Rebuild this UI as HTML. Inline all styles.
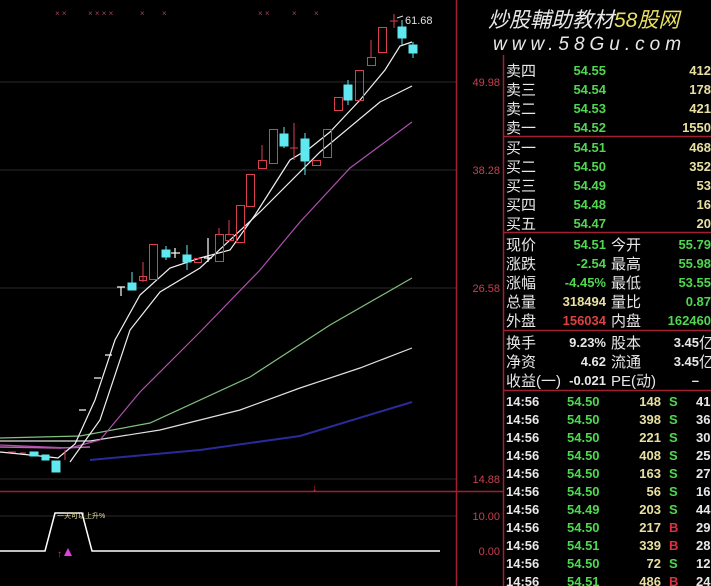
<!DOCTYPE html>
<html><head><meta charset="utf-8"><style>
html,body{margin:0;padding:0;background:#000;overflow:hidden}
svg{display:block}
text{font-family:"Liberation Sans","Noto Sans CJK SC",sans-serif}
.cn{font-family:"Liberation Sans","Noto Sans CJK SC",sans-serif;font-size:15px;fill:#e8e8e8}
.g{fill:#4fd84f;font-size:13px;font-weight:bold}
.y{fill:#e8e0a0;font-size:13px;font-weight:bold}
.w{fill:#e8e8e8;font-size:13px;font-weight:bold}
.ax{fill:#c84050;font-size:11px}
</style></head><body>
<svg width="711" height="586" viewBox="0 0 711 586" xmlns="http://www.w3.org/2000/svg">
<rect width="711" height="586" fill="#000"/>
<g stroke="#2a2a2a" stroke-width="1">
<line x1="0" y1="82" x2="456" y2="82"/>
<line x1="0" y1="170" x2="456" y2="170"/>
<line x1="0" y1="288" x2="456" y2="288"/>
<line x1="0" y1="479" x2="456" y2="479"/>
<line x1="0" y1="516" x2="456" y2="516"/>
</g>
<g stroke="#a02030" stroke-width="1.5">
<line x1="456.5" y1="0" x2="456.5" y2="586"/>
<line x1="503.5" y1="55" x2="503.5" y2="586"/>
<line x1="0" y1="491.5" x2="503" y2="491.5"/>
<line x1="503" y1="136.5" x2="711" y2="136.5"/>
<line x1="503" y1="232.5" x2="711" y2="232.5"/>
<line x1="503" y1="330.5" x2="711" y2="330.5"/>
<line x1="503" y1="390.5" x2="711" y2="390.5"/>
</g>
<g class="ax" text-anchor="end">
<text x="500" y="86">49.98</text>
<text x="500" y="174">38.28</text>
<text x="500" y="292">26.58</text>
<text x="500" y="483">14.88</text>
<text x="500" y="520">10.00</text>
<text x="500" y="555">0.00</text>
</g>
<g fill="#a04060" font-size="8">
<text x="55" y="16">× ×</text><text x="88" y="16">× × × ×</text><text x="140" y="16">×</text><text x="162" y="16">×</text>
<text x="258" y="16">× ×</text><text x="292" y="16">×</text><text x="314" y="16">×</text>
</g>
<g fill="none" stroke-width="1.2">
<path d="M0,447 L60,448 L90,447" stroke="#c060b0" stroke-width="1.5"/>
<path d="M90,460 L200,450 L300,436 L412,402" stroke="#2a2a9a" stroke-width="2"/>
<path d="M0,438 L80,436 L150,423 L250,377 L330,325 L412,278" stroke="#80c080"/>
<path d="M0,441 L90,441 L160,430 L240,410 L300,388 L360,368 L412,348" stroke="#e0e0e0"/>
<path d="M0,445 L70,448 L100,440 L140,392 L200,332 L260,270 L300,222 L350,168 L412,122" stroke="#b050b0"/>
<path d="M70,462 L100,420 L130,330 L160,292 L200,268 L260,212 L320,152 L380,102 L412,86" stroke="#f0f0f0"/>
<path d="M0,452 L40,456 L58,458 L75,444 L95,400 L115,340 L140,295 L170,268 L200,258 L230,250 L255,215 L290,160 L310,148 L330,132 L360,100 L385,70 L400,46 L412,42" stroke="#f0f0f0"/>
</g>
<g stroke="#d84050" fill="none" stroke-width="1">
<line x1="143" y1="262" x2="143" y2="282"/><rect x="139.5" y="276.5" width="7" height="4"/>
<rect x="149.5" y="244.5" width="8" height="35"/>
<rect x="194.5" y="258.5" width="7" height="4"/>
<rect x="215.5" y="234.5" width="8" height="27"/><line x1="219" y1="228" x2="219" y2="234"/>
<rect x="225.5" y="234.5" width="8" height="6"/><line x1="229" y1="220" x2="229" y2="234"/>
<rect x="236.5" y="205.5" width="8" height="37"/>
<rect x="246.5" y="174.5" width="8" height="32"/>
<rect x="258.5" y="160.5" width="8" height="8"/><line x1="262" y1="145" x2="262" y2="160"/>
<rect x="269.5" y="129.5" width="8" height="34"/>
<line x1="294" y1="123" x2="294" y2="160"/><line x1="290" y1="148" x2="298" y2="148"/>
<rect x="312.5" y="160.5" width="8" height="5"/>
<rect x="323.5" y="129.5" width="8" height="28"/>
<rect x="334.5" y="97.5" width="8" height="13"/>
<rect x="355.5" y="70.5" width="8" height="30"/>
<rect x="367.5" y="57.5" width="8" height="8"/><line x1="371" y1="40" x2="371" y2="57"/>
<rect x="378.5" y="27.5" width="8" height="25"/>
<line x1="394" y1="14" x2="394" y2="28"/><line x1="390" y1="21" x2="398" y2="21"/>
<path d="M8,452h8M20,453h6M65,450v10"/>
</g>
<g fill="#60e8f0" stroke="#60e8f0">
<rect x="30" y="452" width="8" height="4"/><rect x="42" y="455" width="7" height="5"/>
<rect x="52" y="461" width="8" height="11"/>
<rect x="128" y="283" width="8" height="7"/><line x1="132" y1="272" x2="132" y2="290"/>
<rect x="162" y="250" width="8" height="7"/><line x1="166" y1="246" x2="166" y2="260"/>
<rect x="183" y="255" width="8" height="7"/><line x1="187" y1="245" x2="187" y2="270"/>
<rect x="280" y="134" width="8" height="12"/><line x1="284" y1="127" x2="284" y2="148"/>
<rect x="301" y="139" width="8" height="22"/><line x1="305" y1="133" x2="305" y2="175"/>
<rect x="344" y="85" width="8" height="15"/><line x1="348" y1="80" x2="348" y2="105"/>
<rect x="398" y="27" width="8" height="11"/><line x1="402" y1="20" x2="402" y2="45"/>
<rect x="409" y="45" width="8" height="8"/><line x1="413" y1="42" x2="413" y2="58"/>
</g>
<g stroke="#fff" stroke-width="1.2">
<line x1="79" y1="410" x2="86" y2="410"/><line x1="94" y1="378" x2="101" y2="378"/>
<line x1="105" y1="355" x2="112" y2="355"/><line x1="117" y1="287" x2="125" y2="287"/><line x1="121" y1="287" x2="121" y2="296"/>
<line x1="171" y1="253" x2="180" y2="253"/><line x1="175" y1="248" x2="175" y2="258"/>
<line x1="208" y1="238" x2="208" y2="262"/><line x1="204" y1="258" x2="212" y2="258"/>
</g>
<text x="405" y="24" fill="#e0e0e0" font-size="11">61.68</text>
<line x1="397" y1="18" x2="403" y2="16" stroke="#ddd"/>
<text x="312" y="491" fill="#e03040" font-size="10">↓</text>
<path d="M0,551 L45,551 L55,513 L82,513 L92,551 L440,551" fill="none" stroke="#fff" stroke-width="1.5"/>
<text x="57" y="518" fill="#e8e0a0" font-size="7">一天可以上升%</text>
<text x="57" y="557" fill="#a05060" font-size="10">↑</text>
<path d="M64,556 L68,548 L72,556Z" fill="#e040e0"/>
<text x="488" y="27" fill="#e8e8e8" font-size="21" font-style="italic">炒股輔助教材<tspan fill="#e8e060">58股网</tspan></text>
<text x="493" y="50" fill="#e8e8e8" font-size="19" font-style="italic" letter-spacing="5">www.58Gu.com</text>
<g class="cn">
<text x="506" y="76">卖四</text><text x="506" y="95">卖三</text><text x="506" y="114">卖二</text><text x="506" y="133">卖一</text>
<text x="506" y="153">买一</text><text x="506" y="172">买二</text><text x="506" y="191">买三</text><text x="506" y="210">买四</text><text x="506" y="229">买五</text>
<text x="506" y="250">现价</text><text x="506" y="269">涨跌</text><text x="506" y="288">涨幅</text><text x="506" y="307">总量</text><text x="506" y="326">外盘</text>
<text x="611" y="250">今开</text><text x="611" y="269">最高</text><text x="611" y="288">最低</text><text x="611" y="307">量比</text><text x="611" y="326">内盘</text>
<text x="506" y="348">换手</text><text x="506" y="367">净资</text><text x="506" y="386">收益(一)</text>
<text x="611" y="348">股本</text><text x="611" y="367">流通</text><text x="611" y="386">PE(动)</text>
</g>
<g class="g" text-anchor="end">
<text x="606" y="75">54.55</text><text x="606" y="94">54.54</text><text x="606" y="113">54.53</text><text x="606" y="132">54.52</text>
<text x="606" y="152">54.51</text><text x="606" y="171">54.50</text><text x="606" y="190">54.49</text><text x="606" y="209">54.48</text><text x="606" y="228">54.47</text>
<text x="606" y="249">54.51</text><text x="606" y="268">-2.54</text><text x="606" y="287">-4.45%</text>
<text x="711" y="249">55.79</text><text x="711" y="268">55.98</text><text x="711" y="287">53.55</text><text x="711" y="306">0.87</text><text x="711" y="325">162460</text>
</g>
<g class="y" text-anchor="end">
<text x="711" y="75">412</text><text x="711" y="94">178</text><text x="711" y="113">421</text><text x="711" y="132">1550</text>
<text x="711" y="152">468</text><text x="711" y="171">352</text><text x="711" y="190">53</text><text x="711" y="209">16</text><text x="711" y="228">20</text>
<text x="606" y="306">318494</text>
</g>
<text x="606" y="325" text-anchor="end" font-size="13" font-weight="bold" fill="#e04040">156034</text>
<g class="w" text-anchor="end">
<text x="606" y="347">9.23%</text><text x="606" y="366">4.62</text><text x="606" y="385">-0.021</text>
<text x="699" y="347">3.45</text><text x="699" y="366">3.45</text><text x="699" y="385">–</text>
</g>
<text x="699" y="348" class="cn">亿</text><text x="699" y="367" class="cn">亿</text>
<g font-size="13" font-weight="bold">
<g fill="#e8e8e8"><text x="506" y="406">14:56</text><text x="506" y="424">14:56</text><text x="506" y="442">14:56</text><text x="506" y="460">14:56</text><text x="506" y="478">14:56</text><text x="506" y="496">14:56</text><text x="506" y="514">14:56</text><text x="506" y="532">14:56</text><text x="506" y="550">14:56</text><text x="506" y="568">14:56</text><text x="506" y="586">14:56</text></g>
<g fill="#4fd84f"><text x="567" y="406">54.50</text><text x="567" y="424">54.50</text><text x="567" y="442">54.50</text><text x="567" y="460">54.50</text><text x="567" y="478">54.50</text><text x="567" y="496">54.50</text><text x="567" y="514">54.49</text><text x="567" y="532">54.50</text><text x="567" y="550">54.51</text><text x="567" y="568">54.50</text><text x="567" y="586">54.51</text></g>
<g fill="#e8e0a0" text-anchor="end"><text x="661" y="406">148</text><text x="661" y="424">398</text><text x="661" y="442">221</text><text x="661" y="460">408</text><text x="661" y="478">163</text><text x="661" y="496">56</text><text x="661" y="514">203</text><text x="661" y="532">217</text><text x="661" y="550">339</text><text x="661" y="568">72</text><text x="661" y="586">486</text></g>
<g fill="#4fd84f"><text x="669" y="406">S</text><text x="669" y="424">S</text><text x="669" y="442">S</text><text x="669" y="460">S</text><text x="669" y="478">S</text><text x="669" y="496">S</text><text x="669" y="514">S</text><text x="669" y="568">S</text></g>
<g fill="#e03040"><text x="669" y="532">B</text><text x="669" y="550">B</text><text x="669" y="586">B</text></g>
<g fill="#e8e8e8"><text x="696" y="406">41</text><text x="696" y="424">36</text><text x="696" y="442">30</text><text x="696" y="460">25</text><text x="696" y="478">27</text><text x="696" y="496">16</text><text x="696" y="514">44</text><text x="696" y="532">29</text><text x="696" y="550">28</text><text x="696" y="568">12</text><text x="696" y="586">24</text></g>
</g>
</svg>
</body></html>
